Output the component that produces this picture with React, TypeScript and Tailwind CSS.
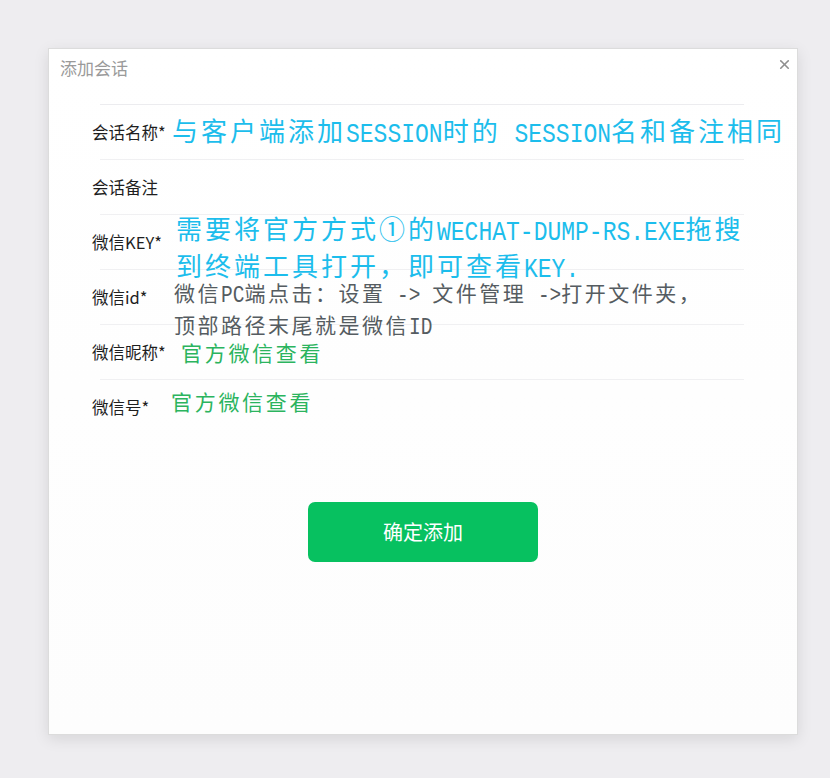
import { X } from "lucide-react";

const cjk = '"Noto Sans CJK SC", sans-serif';

const rows = ["会话名称*", "会话备注", "微信KEY*", "微信id*", "微信昵称*", "微信号*"];

// hand-written notes drawn over the form
function Note({ children, className }: { children: React.ReactNode; className: string }) {
  return (
    <div
      className={`absolute whitespace-nowrap ${className}`}
      style={{ fontFamily: '"Liberation Mono", "Noto Sans CJK SC", monospace' }}
    >
      {children}
    </div>
  );
}

function Cn({ children, t }: { children: React.ReactNode; t: string }) {
  return <span className={t} style={{ fontFamily: cjk }}>{children}</span>;
}

// latin part of the notes is tall and narrow
function En({ children }: { children: React.ReactNode }) {
  return <span className="inline-block origin-center scale-y-[1.2] whitespace-pre">{children}</span>;
}

export default function App() {
  return (
    <div className="min-h-[778px] w-[830px] bg-[#eeedf0] pl-12 pt-12">
      <div className="relative h-[687px] w-[750px] border border-[#dcdcdc] bg-gradient-to-b from-white to-[#fdfdfd] shadow-[0_4px_14px_rgba(0,0,0,0.10)]">
        <div className="flex items-start justify-between pl-[11px] pr-[5px] pt-[7px]">
          <span className="text-[17px] leading-6 text-[#9a9a9a]" style={{ fontFamily: cjk }}>
            添加会话
          </span>
          <X className="mt-[1px] h-[15px] w-[15px] text-[#8f8f8f]" strokeWidth={2.6} />
        </div>

        <div className="mt-[24px] flex flex-col">
          {rows.map((r) => (
            <div key={r} className="ml-[51px] flex h-[55px] w-[644px] items-center border-t border-[#f0f0f2] first:border-[#ececef]">
              <span className="-ml-[8px] text-[16.5px] text-[#1e1e1e]" style={{ fontFamily: cjk }}>
                {r}
              </span>
            </div>
          ))}
        </div>

        <div className="mt-[68px] flex justify-center">
          <button
            className="flex h-[60px] w-[230px] items-center justify-center rounded-[7px] bg-[#07c160] text-[20px] text-white"
            style={{ fontFamily: cjk }}
          >
            确定添加
          </button>
        </div>

        <Note className="left-[123px] top-[64px] text-[23px] leading-[34px] text-[#1cbdec]">
          <Cn t="text-[26px] tracking-[3px]">与客户端添加</Cn>
          <En>SESSION</En>
          <Cn t="text-[26px] tracking-[3px]">时的</Cn>
          <En> SESSION</En>
          <Cn t="text-[26px] tracking-[3px]">名和备注相同</Cn>
        </Note>

        <Note className="left-[127px] top-[163px] text-[23px] leading-[31px] text-[#1cbdec]">
          <div>
            <Cn t="text-[26px] tracking-[3px]">需要将官方方式①的</Cn>
            <En>WECHAT-DUMP-RS.EXE</En>
            <Cn t="text-[26px] tracking-[3px]">拖搜</Cn>
          </div>
          <div>
            <Cn t="text-[26px] tracking-[3px]">到终端工具打开，即可查看</Cn>
            <En>KEY.</En>
          </div>
        </Note>

        <Note className="left-[125px] top-[229px] text-[19.5px] leading-[28px] text-[#555c61]">
          <div>
            <Cn t="text-[21px] tracking-[2.5px]">微信</Cn>
            <En>PC</En>
            <Cn t="text-[21px] tracking-[2.5px]">端点击：设置</Cn>
            <En> -&gt; </En>
            <Cn t="text-[21px] tracking-[2.5px]">文件管理</Cn>
            <En> -&gt;</En>
            <Cn t="text-[21px] tracking-[2.5px]">打开文件夹，</Cn>
          </div>
          <div>
            <Cn t="text-[21px] tracking-[2.5px]">顶部路径末尾就是微信</Cn>
            <En>ID</En>
          </div>
        </Note>

        <Note className="left-[132px] top-[288px] text-[21px] leading-[30px] text-[#2bb45e]">
          <Cn t="tracking-[2.7px]">官方微信查看</Cn>
        </Note>
        <Note className="left-[122px] top-[337px] text-[21px] leading-[30px] text-[#2bb45e]">
          <Cn t="tracking-[2.7px]">官方微信查看</Cn>
        </Note>
      </div>
    </div>
  );
}
